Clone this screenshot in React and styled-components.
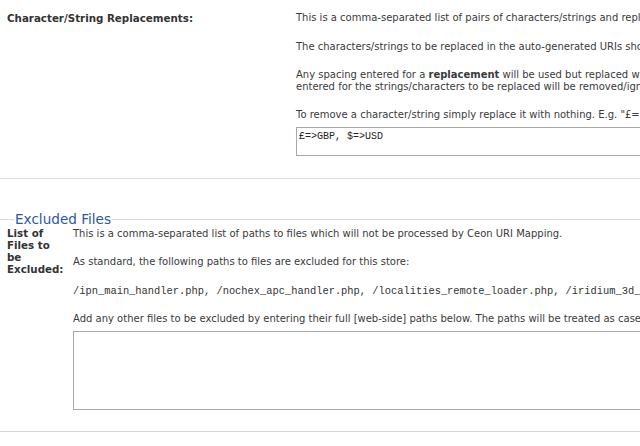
import React from "react";
import styled, { createGlobalStyle } from "styled-components";

const GlobalStyle = createGlobalStyle`
  html, body {
    margin: 0;
    padding: 0;
    background: #fff;
  }
  body {
    font-family: "DejaVu Sans", Verdana, sans-serif;
    font-size: 10px;
    color: #3a3a3a;
  }
`;

const Page = styled.div`
  width: 640px;
  height: 446px;
  overflow: hidden;
`;

const Section = styled.div`
  display: grid;
  grid-template-columns: 296px 800px;
  padding: 12px 0 22px;
  border-bottom: 1px solid #dcdcdc;
`;

const Label = styled.div`
  padding-left: 7px;
  font-weight: bold;
  font-size: 10.3px;
  color: #333;
  line-height: 12px;
`;

const Content = styled.div`
  line-height: 12px;
  white-space: nowrap;
`;

const Para = styled.p`
  margin: 0 0 ${(p) => p.$gap || 17}px;
`;

const Mono = styled.p`
  margin: 0 0 16px;
  font-family: "Liberation Mono", "Courier New", monospace;
  font-size: 10.4px;
  color: #333;
`;

const TextArea = styled.div`
  box-sizing: border-box;
  width: 760px;
  height: ${(p) => p.$h}px;
  border: 1px solid #a8a8a8;
  border-right: none;
  background: #fff;
  padding: 3px 2px;
  font-family: "Liberation Mono", "Courier New", monospace;
  font-size: 10px;
  color: #222;
`;

const Fieldset = styled.fieldset`
  margin: 33px 0 0;
  padding: 0 0 21px;
  border: none;
  border-top: 1px solid #d8d8d8;
  border-bottom: 1px solid #d8d8d8;
  min-width: 0;
`;

const Legend = styled.legend`
  margin-left: 14px;
  padding: 0 1px;
  font-size: 13.6px;
  color: #2a56a8;
  line-height: 14px;
`;

const FieldRow = styled.div`
  display: grid;
  grid-template-columns: 73px 800px;
  padding-top: 2px;
`;

const SmallLabel = styled(Label)`
  width: 58px;
  margin-top: -1px;
`;

export default function App() {
  return (
    <Page>
      <GlobalStyle />
      <Section>
        <Label>Character/String Replacements:</Label>
        <Content>
          <Para>
            This is a comma-separated list of pairs of characters/strings and replacements to be used.
          </Para>
          <Para $gap={16}>
            The characters/strings to be replaced in the auto-generated URIs should be separated from their replacements.
          </Para>
          <Para $gap={16}>
            Any spacing entered for a <b>replacement</b> will be used but replaced with the configured whitespace replacement character.
            <br />
            entered for the strings/characters to be replaced will be removed/ignored.
          </Para>
          <Para $gap={6}>
            To remove a character/string simply replace it with nothing. E.g. "£=&gt;"
          </Para>
          <TextArea $h={29}>£=&gt;GBP, $=&gt;USD</TextArea>
        </Content>
      </Section>
      <Fieldset>
        <Legend>Excluded Files</Legend>
        <FieldRow>
          <SmallLabel>List of Files to be Excluded:</SmallLabel>
          <Content>
            <Para $gap={16}>
              This is a comma-separated list of paths to files which will not be processed by Ceon URI Mapping.
            </Para>
            <Para $gap={17}>
              As standard, the following paths to files are excluded for this store:
            </Para>
            <Mono>
              /ipn_main_handler.php, /nochex_apc_handler.php, /localities_remote_loader.php, /iridium_3d_secure.php
            </Mono>
            <Para $gap={6}>
              Add any other files to be excluded by entering their full [web-side] paths below. The paths will be treated as case-sensitive.
            </Para>
            <TextArea $h={79} />
          </Content>
        </FieldRow>
      </Fieldset>
    </Page>
  );
}
